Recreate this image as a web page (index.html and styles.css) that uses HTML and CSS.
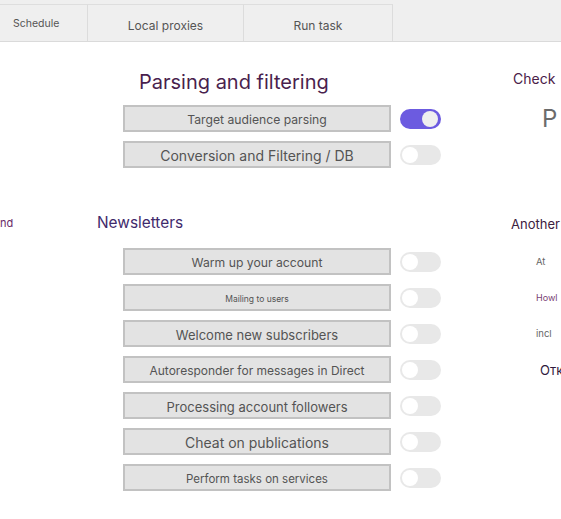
FILE: index.html
```html
<!DOCTYPE html>
<html lang="en">
<head>
    <meta charset="UTF-8">
    <meta name="viewport" content="width=device-width, initial-scale=1.0">
    <title>Tasks</title>
    <link rel="stylesheet" href="styles.css">
</head>
<body>
    <nav class="tabs">
        <div class="tab tab-small">Schedule</div>
        <div class="tab tab-proxies">Local proxies</div>
        <div class="tab tab-run">Run task</div>
    </nav>

    <div class="page">
        <!-- left column, mostly scrolled out of view -->
        <div class="col-left">
            <span class="side-note">nd</span>
        </div>

        <!-- main settings -->
        <div class="col-main">
            <h2 class="title title-parsing">Parsing and filtering</h2>
            <div class="list list-parsing">
                <div class="row">
                    <div class="option fs122">Target audience parsing</div>
                    <div class="switch on"></div>
                </div>
                <div class="row">
                    <div class="option fs14">Conversion and Filtering / DB</div>
                    <div class="switch"></div>
                </div>
            </div>

            <h2 class="title title-news">Newsletters</h2>
            <div class="list">
                <div class="row">
                    <div class="option fs122">Warm up your account</div>
                    <div class="switch"></div>
                </div>
                <div class="row">
                    <div class="option fs85">Mailing to users</div>
                    <div class="switch"></div>
                </div>
                <div class="row">
                    <div class="option fs13">Welcome new subscribers</div>
                    <div class="switch"></div>
                </div>
                <div class="row">
                    <div class="option fs12">Autoresponder for messages in Direct</div>
                    <div class="switch"></div>
                </div>
                <div class="row">
                    <div class="option fs13">Processing account followers</div>
                    <div class="switch"></div>
                </div>
                <div class="row">
                    <div class="option fs14">Cheat on publications</div>
                    <div class="switch"></div>
                </div>
                <div class="row">
                    <div class="option fs115">Perform tasks on services</div>
                    <div class="switch"></div>
                </div>
            </div>
        </div>

        <!-- right column, cut by the window edge -->
        <div class="col-right">
            <div class="side-title side-check">Check</div>
            <div class="side-big">P</div>
            <div class="side-title side-another">Another</div>
            <div class="side-list">
                <div class="side-row side-gray">At</div>
                <div class="side-row side-plum">Howl</div>
                <div class="side-row side-gray">incl</div>
                <div class="side-row side-dark">Отк</div>
            </div>
        </div>
    </div>
</body>
</html>
```

FILE: styles.css
```css
html, body {
    margin: 0;
    padding: 0;
    background: #fff;
    font-family: "Inter", "Noto Sans", sans-serif;
    color: #555;
    overflow: hidden;
}

/* Tabs */
.tabs {
    display: flex;
    height: 37px;
    padding-top: 4px;
    background: #efefef;
    border-bottom: 1px solid #dadada;
}

.tab {
    display: flex;
    align-items: center;
    justify-content: center;
    box-sizing: border-box;
    border-top: 1px solid #dedede;
    border-right: 1px solid #dcdcdc;
    padding-top: 5px;
    font-size: 12px;
    color: #555;
}

.tab-small {
    width: 88px;
    justify-content: flex-start;
    padding-left: 13px;
    padding-top: 1px;
    font-size: 10.5px;
}

.tab-proxies {
    width: 156px;
}

.tab-run {
    width: 149px;
}

/* Columns */
.page {
    display: flex;
    width: 561px;
    overflow: hidden;
}

.col-left {
    width: 97px;
    flex-shrink: 0;
}

.col-main {
    width: 414px;
    flex-shrink: 0;
}

.col-right {
    flex: 1;
    white-space: nowrap;
}

.side-note {
    display: block;
    margin-top: 174px;
    font-size: 11px;
    line-height: 14px;
    color: #6a2a68;
}

/* Section titles */
.title {
    margin: 0;
    font-weight: 400;
}

.title-parsing {
    margin-top: 27px;
    padding-left: 42px;
    font-size: 20px;
    line-height: 26px;
    color: #4a1f4e;
}

.title-news {
    margin-top: 45px;
    font-size: 15.4px;
    line-height: 20px;
    color: #3f2a6c;
}

.list {
    display: flex;
    flex-direction: column;
    gap: 9px;
    margin-top: 15px;
    padding-left: 26px;
}

.list-parsing {
    margin-top: 10px;
}

.row {
    display: flex;
    align-items: center;
    gap: 9px;
}

.option {
    box-sizing: border-box;
    width: 268px;
    height: 27px;
    padding-top: 2px;
    display: flex;
    align-items: center;
    justify-content: center;
    background: #e3e3e3;
    border: 2px solid #c2c2c2;
    color: #545454;
    white-space: nowrap;
}

.fs85 { font-size: 8.5px; }
.fs115 { font-size: 11.5px; }
.fs12 { font-size: 12px; }
.fs122 { font-size: 12.2px; }
.fs13 { font-size: 13px; }
.fs14 { font-size: 14px; }

/* Toggle switches */
.switch {
    position: relative;
    width: 41px;
    height: 20px;
    border-radius: 10px;
    background: #e8e8e8;
}

.switch::after {
    content: "";
    position: absolute;
    top: 2px;
    left: 2px;
    width: 16px;
    height: 16px;
    border-radius: 50%;
    background: #fff;
}

.switch.on {
    background: #6c5be0;
}

.switch.on::after {
    left: auto;
    right: 3px;
    background: #efefef;
}

/* Right column */
.side-title {
    font-size: 14px;
    line-height: 18px;
}

.side-check {
    margin-top: 28px;
    padding-left: 2px;
    color: #4a2048;
}

.side-big {
    margin-top: 17px;
    padding-left: 31px;
    font-size: 24px;
    line-height: 28px;
    color: #6b6b6b;
}

.side-another {
    margin-top: 82px;
    font-size: 13px;
    color: #3c2040;
}

.side-list {
    display: flex;
    flex-direction: column;
    gap: 9px;
    margin-top: 15px;
    padding-left: 25px;
}

.side-row {
    height: 27px;
    display: flex;
    align-items: center;
    font-size: 9.5px;
}

.side-gray {
    color: #666;
}

.side-plum {
    color: #7a3f74;
    font-size: 9px;
}

.side-dark {
    padding-left: 4px;
    font-size: 13px;
    color: #2f1a3e;
}
```
